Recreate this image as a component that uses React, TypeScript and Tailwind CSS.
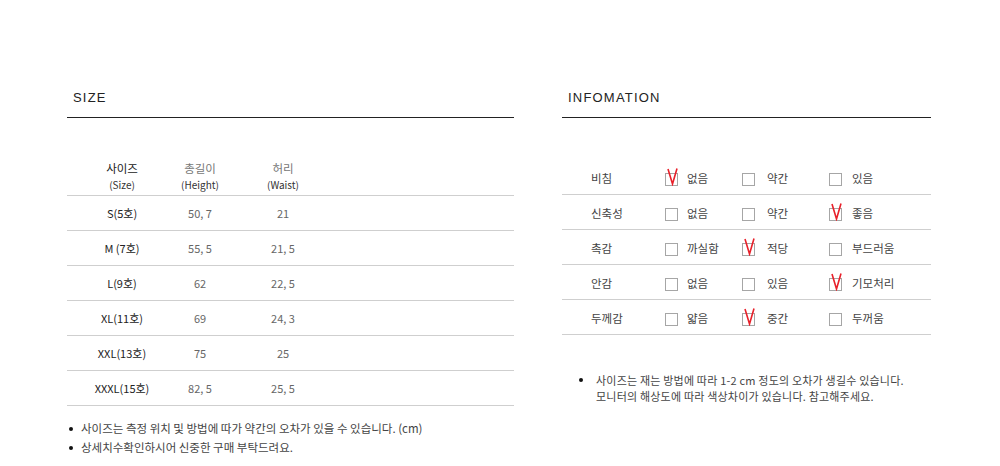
import React from "react";

const font = { fontFamily: '"Noto Sans CJK KR", "Noto Sans", sans-serif' };

const sizes = [
    ["S(5호)", "50, 7", "21"],
    ["M (7호)", "55, 5", "21, 5"],
    ["L(9호)", "62", "22, 5"],
    ["XL(11호)", "69", "24, 3"],
    ["XXL(13호)", "75", "25"],
    ["XXXL(15호)", "82, 5", "25, 5"],
];

const info: { label: string; options: string[]; checked: number }[] = [
    { label: "비침", options: ["없음", "약간", "있음"], checked: 0 },
    { label: "신축성", options: ["없음", "약간", "좋음"], checked: 2 },
    { label: "촉감", options: ["까실함", "적당", "부드러움"], checked: 1 },
    { label: "안감", options: ["없음", "있음", "기모처리"], checked: 2 },
    { label: "두께감", options: ["얇음", "중간", "두꺼움"], checked: 1 },
];

function Box({ on }: { on: boolean }) {
    return (
        <span className="relative inline-block w-[13px] h-[13px] border border-[#a6a6a6] bg-white shrink-0">
            {on && (
                <svg className="absolute left-[1px] top-[-6px]" width="11" height="18" viewBox="0 0 11 18">
                    <path d="M1 1 L5.5 16 L10 0.5" fill="none" stroke="#e8202a" strokeWidth="1.6" />
                </svg>
            )}
        </span>
    );
}

export default function App() {
    return (
        <div className="w-[1000px] h-[466px] bg-white overflow-hidden text-[#444]" style={font}>
            <div className="flex pl-[67px] pt-[88px] gap-[48px]">
                {/* SIZE */}
                <section className="w-[447px]">
                    <h2 className="pl-[6px] h-[29px] text-[13px] tracking-[1.2px] text-[#222]" style={{ fontFamily: '"Liberation Sans", Arial, sans-serif' }}>
                        SIZE
                    </h2>
                    <div className="h-px bg-[#222]" />

                    <div className="mt-[40px]">
                        <div className="grid grid-cols-[110px_46px_120px_1fr] h-[38px] pt-[3px] border-b border-[#cfcfcf] text-center">
                            <div className="leading-[15px]">
                                <div className="text-[11.5px] text-[#222]">사이즈</div>
                                <div className="text-[10px] text-[#333] mt-[1px]">(Size)</div>
                            </div>
                            <div className="leading-[15px]">
                                <div className="text-[11.5px] text-[#777]">총길이</div>
                                <div className="text-[10px] text-[#333] mt-[1px] whitespace-nowrap -mx-[6px]">(Height)</div>
                            </div>
                            <div className="leading-[15px]">
                                <div className="text-[11.5px] text-[#777]">허리</div>
                                <div className="text-[10px] text-[#333] mt-[1px]">(Waist)</div>
                            </div>
                        </div>
                        {sizes.map(([s, h, w]) => (
                            <div key={s} className="grid grid-cols-[110px_46px_120px_1fr] h-[35px] items-center border-b border-[#cfcfcf] text-center text-[11px]">
                                <div className="text-[#222] whitespace-nowrap">{s}</div>
                                <div className="text-[#666] whitespace-nowrap">{h}</div>
                                <div className="text-[#666] whitespace-nowrap">{w}</div>
                            </div>
                        ))}
                    </div>

                    <ul className="mt-[13px] text-[11.5px] leading-[19px] text-[#444]">
                        <li className="flex items-center gap-[8px]">
                            <span className="w-[4px] h-[4px] rounded-full bg-[#111] ml-[2px]" />
                            사이즈는 측정 위치 및 방법에 따가 약간의 오차가 있을 수 있습니다. (cm)
                        </li>
                        <li className="flex items-center gap-[8px]">
                            <span className="w-[4px] h-[4px] rounded-full bg-[#111] ml-[2px]" />
                            상세치수확인하시어 신중한 구매 부탁드려요.
                        </li>
                    </ul>
                </section>

                {/* INFOMATION */}
                <section className="w-[369px]">
                    <h2 className="pl-[6px] h-[29px] text-[13px] tracking-[1.2px] text-[#222]" style={{ fontFamily: '"Liberation Sans", Arial, sans-serif' }}>
                        INFOMATION
                    </h2>
                    <div className="h-px bg-[#222]" />

                    <div className="mt-[42px]">
                        {info.map((row) => (
                            <div key={row.label} className="flex items-center h-[35px] pt-[4px] border-b border-[#cfcfcf] pl-[29px] text-[11.5px]">
                                <div className="w-[74px] text-[#444]">{row.label}</div>
                                {row.options.map((o, i) => (
                                    <div key={o} className={`flex items-center ${i === 0 ? "w-[77px] gap-[9px]" : i === 1 ? "w-[87px] gap-[12px]" : "gap-[10px]"}`}>
                                        <Box on={row.checked === i} />
                                        <span className="text-[#444]">{o}</span>
                                    </div>
                                ))}
                            </div>
                        ))}
                    </div>

                    <div className="mt-[37px] flex gap-[13px] pl-[17px] text-[11px] tracking-[0.2px] leading-[16px] text-[#444]">
                        <span className="w-[4px] h-[4px] rounded-full bg-[#111] mt-[6px] shrink-0" />
                        <p>
                            사이즈는 재는 방법에 따라 1-2 cm 정도의 오차가 생길수 있습니다.
                            <br />
                            모니터의 해상도에 따라 색상차이가 있습니다. 참고해주세요.
                        </p>
                    </div>
                </section>
            </div>
        </div>
    );
}
